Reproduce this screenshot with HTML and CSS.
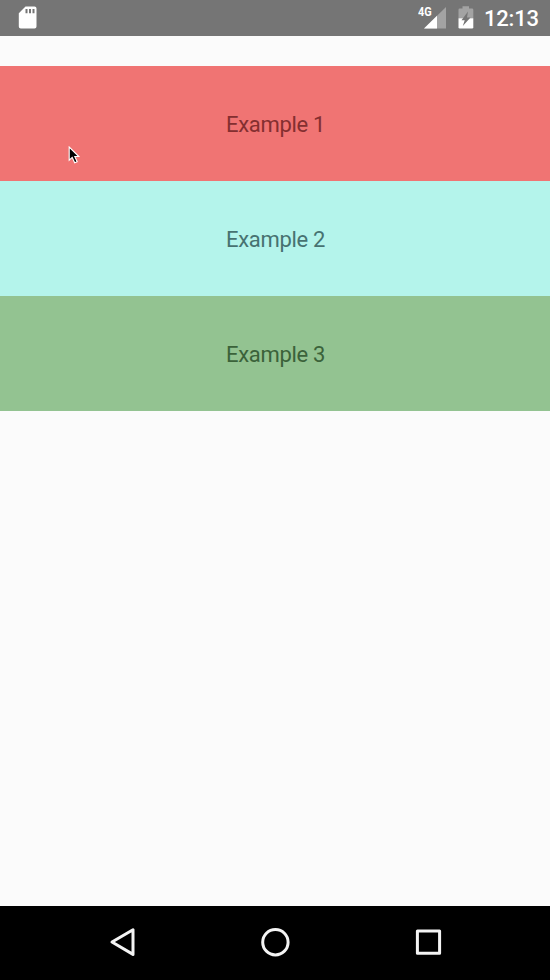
FILE: index.html
```
<!DOCTYPE html>
<html lang="en">
<head>
<meta charset="utf-8">
<title>Examples</title>
<link rel="stylesheet" href="styles.css">
</head>
<body>
<div class="screen">
  <header class="status">
    <svg class="sd" width="19" height="23" viewBox="0 0 19 23"><path transform="translate(.5 .2)" fill="#fff" fill-rule="evenodd" d="M7 .3H16Q18 .3 18 2.3V20.3Q18 22.3 16 22.3H2.3Q.3 22.3 .3 20.3V7ZM7 2.7V7H9V2.7ZM10.5 2.7V7H12.5V2.7ZM14 2.7V7H16V2.7Z"/></svg>
    <span class="network">4G</span>
    <svg class="signal" width="22" height="22" viewBox="0 0 22 22"><path fill="#a3a3a3" d="M22 0V21.5H0Z"/><path fill="#fff" d="M13 8.8V21.5H0Z"/></svg>
    <svg class="battery" width="16" height="23" viewBox="0 0 16 23"><path fill="#a3a3a3" d="M4.5 .3H11V2.5H14Q15.3 2.5 15.3 3.8V12.3H.5V3.8Q.5 2.5 1.8 2.5H4.5Z"/><path fill="#fff" d="M.5 12.3H15.3V21.2Q15.3 22.5 14 22.5H1.8Q.5 22.5 .5 21.2Z"/><path fill="#757575" d="M10 5.5L3.5 14.3H6.7L4.8 20L12.5 11.5H9Z"/></svg>
    <time class="clock">12:13</time>
  </header>
  <main class="list">
    <div class="row red">Example 1</div>
    <div class="row cyan">Example 2</div>
    <div class="row green">Example 3</div>
  </main>
  <nav class="nav">
    <svg width="30" height="32" viewBox="0 0 30 32"><path d="M26 3.8V28.4L5 16Z"/></svg>
    <svg width="32" height="32" viewBox="0 0 32 32"><circle cx="16.4" cy="16.2" r="12.7"/></svg>
    <svg width="30" height="32" viewBox="0 0 30 32"><rect x="4.4" y="5.1" width="22.2" height="22.2"/></svg>
  </nav>
  <svg class="pointer" width="14" height="20" viewBox="0 0 14 20"><path d="M1.2 1V14.2L4.2 11.4L6.7 16.8L9.2 15.7L6.8 10.5H10.8Z" fill="#000" stroke="#fff" stroke-width="1.1"/></svg>
</div>
</body>
</html>
```

FILE: styles.css
```
* { box-sizing: border-box; }
body { margin: 0; font-family: Roboto, sans-serif; }
.screen {
  position: relative;
  display: flex;
  flex-direction: column;
  height: 980px;
  background: #fbfbfb;
}
.status {
  display: flex;
  align-items: flex-start;
  height: 36px;
  padding: 6px 12px 0 18px;
  background: #757575;
  color: #fff;
}
.network {
  margin-left: auto;
  width: 6px;
  font-size: 13px;
  font-weight: 700;
  line-height: 12px;
  white-space: nowrap;
  transform: scaleX(.84);
  transform-origin: 0 0;
}
.signal { position: relative; margin-top: .5px; }
.battery { margin-left: 12px; }
.clock {
  width: 54px;
  margin-left: 10px;
  font-size: 22px;
  font-weight: 500;
  line-height: 25px;
  letter-spacing: -.2px;
  white-space: nowrap;
}
.list { flex: 1; padding-top: 30.4px; }
.row {
  display: flex;
  align-items: center;
  justify-content: center;
  height: 114.8px;
  padding: 2px 0 0 1px;
  font-size: 22px;
  letter-spacing: -.32px;
}
.red { background: #f07473; color: #842f30; }
.cyan { background: #b4f4eb; color: #477271; }
.green { background: #93c391; color: #3b623a; }
.nav {
  display: flex;
  justify-content: center;
  gap: 122px;
  height: 74.4px;
  padding-top: 20.6px;
  background: #000;
}
.nav svg { fill: none; stroke: #f4f4f4; stroke-width: 3; stroke-linejoin: round; }
.pointer { position: absolute; left: 68px; top: 145.5px; }
```
